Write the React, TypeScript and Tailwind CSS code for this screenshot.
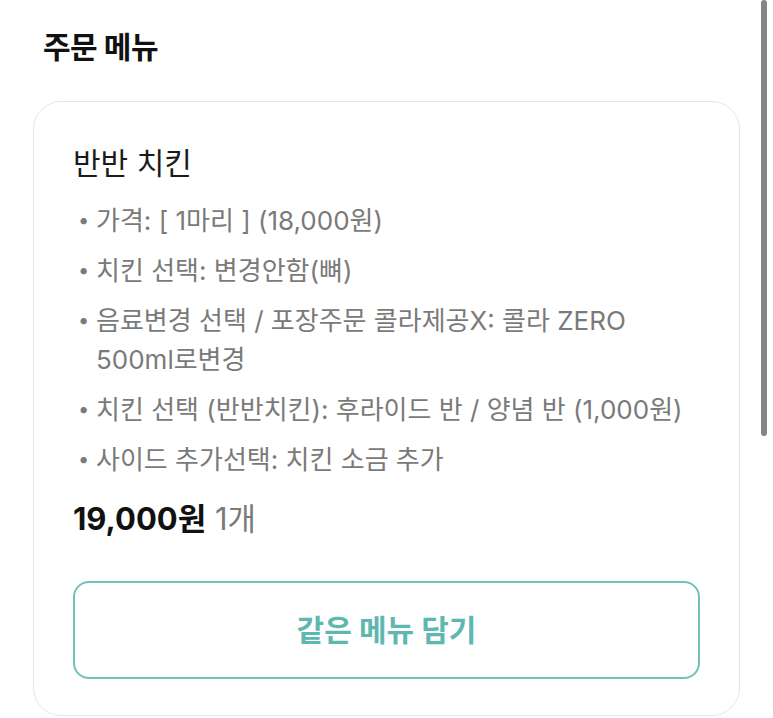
export default function App() {
  const options = [
    "가격: [ 1마리 ] (18,000원)",
    "치킨 선택: 변경안함(뼈)",
    "음료변경 선택 / 포장주문 콜라제공X: 콜라 ZERO 500ml로변경",
    "치킨 선택 (반반치킨): 후라이드 반 / 양념 반 (1,000원)",
    "사이드 추가선택: 치킨 소금 추가",
  ];

  return (
    <div className="relative h-[718px] w-[773px] overflow-hidden bg-white font-['Inter','Noto_Sans_CJK_KR',sans-serif]">
      <h2 className="ml-[43px] mt-[29px] text-[30px] leading-[36px] font-bold tracking-[-0.5px] text-[#111]">
        주문 메뉴
      </h2>

      <div className="ml-[33px] mt-[36px] w-[707px] rounded-[28px] border border-[#e6e6e6] px-[39px] pt-[43px] pb-[36px]">
        <h3 className="text-[30px] leading-[36px] text-[#1a1a1a]">반반 치킨</h3>

        <ul className="mt-[20px] flex flex-col gap-[11px]">
          {options.map((o) => (
            <li
              key={o}
              className="flex pl-[5px] text-[26px] leading-[39px] text-[#7a7a7a]"
            >
              <span className="w-[18px] shrink-0 text-[20px]">•</span>
              <span>{o}</span>
            </li>
          ))}
        </ul>

        <div className="mt-[22px] text-[31px] leading-[36px]">
          <span className="font-bold text-[#111]">19,000원</span>{" "}
          <span className="text-[#7a7a7a]">1개</span>
        </div>

        <button className="mt-[44px] flex h-[98px] w-full items-center justify-center rounded-[16px] border-2 border-[#6fc2ba] text-[30px] font-bold text-[#5fb8af]">
          같은 메뉴 담기
        </button>
      </div>

      <div className="absolute right-[6px] top-0 h-[436px] w-[6px] rounded-full bg-[#858585]" />
    </div>
  );
}
